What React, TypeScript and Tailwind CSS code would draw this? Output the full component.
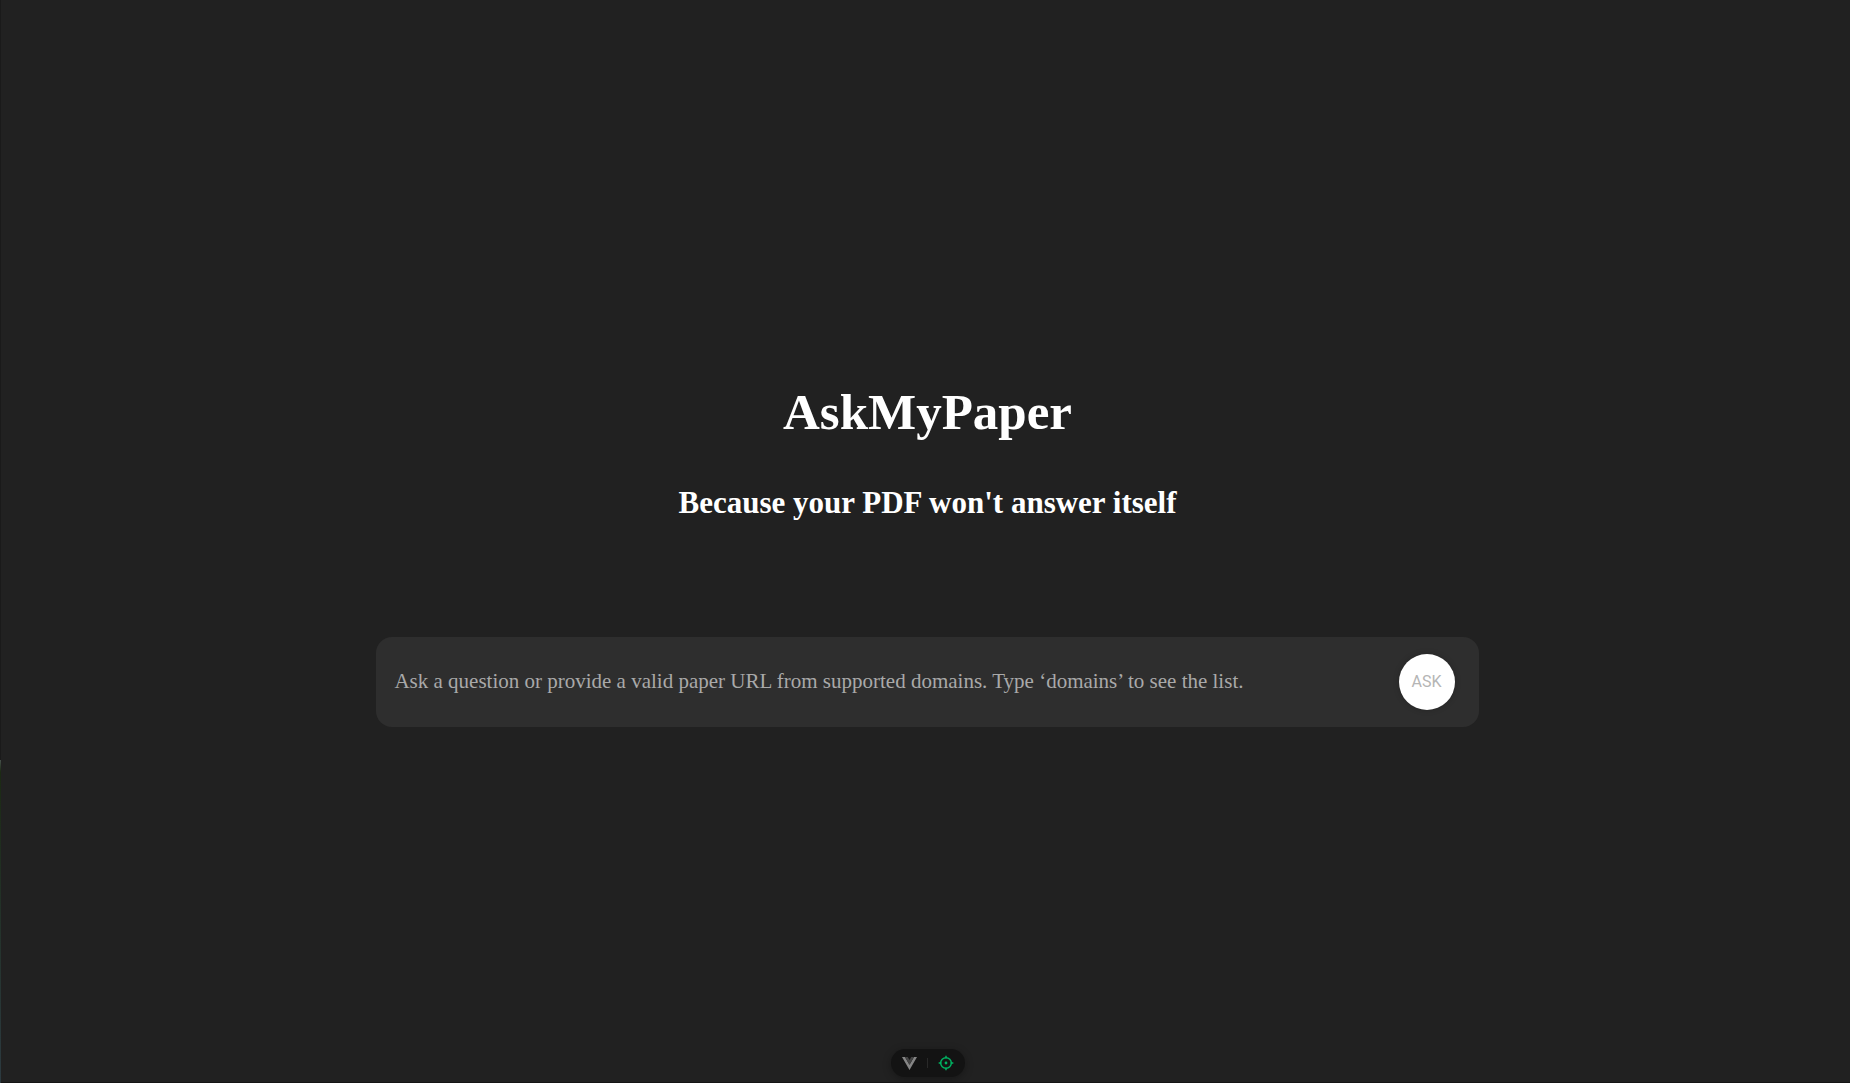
export default function App() {
  return (
    <div className="flex min-h-screen bg-[#212121] font-['Liberation_Serif',serif] text-white">
      <div className="flex w-px shrink-0 flex-col">
        <div className="grow-[71] bg-[#1a1a1a]" />
        <div className="h-3 bg-gradient-to-b from-[#46504b] to-[#1c2a14]" />
        <div className="grow-[29] bg-gradient-to-b from-[#1c2a14] to-[#2c3a40]" />
      </div>
      <div className="flex grow flex-col items-center border-b border-[#151515] pt-[378px] pr-1 pb-[5px] pl-2">
        <h1 className="text-[51px] leading-[68px] font-bold">AskMyPaper</h1>
        <h2 className="mt-[34px] text-[31px] leading-[46px] font-bold">Because your PDF won't answer itself</h2>
        <form
          onSubmit={(e) => e.preventDefault()}
          className="mt-[111px] flex h-[90px] w-3/5 items-center rounded-2xl bg-[#2e2e2e] pr-6 pl-[18px]"
        >
          <input
            type="text"
            aria-label="Question or paper URL"
            placeholder="Ask a question or provide a valid paper URL from supported domains. Type ‘domains’ to see the list."
            className="min-w-0 grow bg-transparent pb-0.5 text-[21px] leading-8 text-white outline-none placeholder:text-[#a9a9a9]"
          />
          <button
            type="submit"
            className="flex size-14 shrink-0 items-center justify-center rounded-full bg-white font-['Roboto',sans-serif] text-base text-[#b5b5b5] shadow-[0_0_6px_rgba(0,0,0,0.2)]"
          >
            ASK
          </button>
        </form>
        <div className="mt-auto flex h-7 w-[74px] items-center justify-center rounded-full bg-[#131313] shadow-[0_2px_8px_rgba(0,0,0,0.3)]">
          <button type="button" aria-label="Vue DevTools" className="flex w-[35px] justify-center">
            <svg width="15" height="13" viewBox="0 0 256 221" aria-hidden="true">
              <path fill="#858585" d="m0 0 128 221L256 0h-51l-77 132L50 0z" />
              <path fill="#444" d="m50 0 78 133L205 0h-48l-29 51L98 0z" />
            </svg>
          </button>
          <div className="h-2.5 w-px bg-[#292929]" />
          <button type="button" aria-label="Inspect component" className="flex w-[36px] justify-center">
            <svg width="16" height="16" viewBox="0 0 24 24" fill="none" stroke="#00b262" strokeWidth="2.2" aria-hidden="true">
              <circle cx="12" cy="12" r="8" />
              <circle cx="12" cy="12" r="1" />
              <path d="M12 1v4M12 19v4M1 12h4M19 12h4" />
            </svg>
          </button>
        </div>
      </div>
    </div>
  );
}
